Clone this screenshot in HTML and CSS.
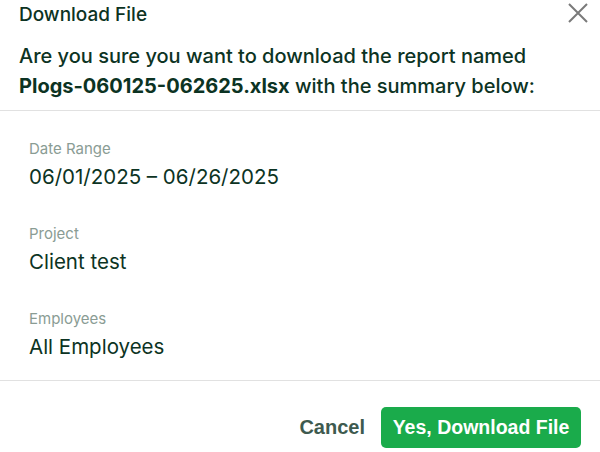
FILE: index.html
```html
<!DOCTYPE html>
<html lang="en">
<head>
  <meta charset="UTF-8" />
  <title>Download File</title>
  <link rel="stylesheet" href="styles.css">
</head>
<body>
  <div class="modal">
    <div class="modal-head">
      <div class="title-row">
        <h2>Download File</h2>
        <button class="close" aria-label="Close">
          <svg width="22" height="22" viewBox="0 0 22 22"><path d="M2 2 L20 20 M20 2 L2 20" stroke="#7a7a7a" stroke-width="2" fill="none"/></svg>
        </button>
      </div>
      <p class="question">Are you sure you want to download the report named<br><strong>Plogs-060125-062625.xlsx</strong> with the summary below:</p>
    </div>

    <div class="summary">
      <div class="field">
        <span class="label">Date Range</span>
        <span class="value">06/01/2025 – 06/26/2025</span>
      </div>
      <div class="field">
        <span class="label">Project</span>
        <span class="value">Client test</span>
      </div>
      <div class="field">
        <span class="label">Employees</span>
        <span class="value">All Employees</span>
      </div>
    </div>

    <div class="modal-foot">
      <button class="btn-cancel">Cancel</button>
      <button class="btn-primary">Yes, Download File</button>
    </div>
  </div>
</body>
</html>
```

FILE: styles.css
```css
* { margin: 0; padding: 0; box-sizing: border-box; }
body { font-family: 'Inter', 'Noto Sans', sans-serif; background: #fff; color: #0c3323; }
.modal { width: 600px; }

.modal-head { padding: 3px 19px 0; border-bottom: 1px solid #e1e1e1; height: 111px; }
.title-row { display: flex; justify-content: space-between; align-items: flex-start; }
.title-row h2 { font-size: 19px; font-weight: 500; line-height: 24px; white-space: nowrap; }
.close { background: none; border: none; margin: -1px -8px 0 0; cursor: pointer; }
.question { font-size: 20px; font-weight: 500; line-height: 30px; margin-top: 14px; white-space: nowrap; }
.question strong { font-weight: 700; }

.summary { padding: 28px 29px 0; height: 270px; border-bottom: 1px solid #e1e1e1; display: flex; flex-direction: column; gap: 34px; }
.field { display: flex; flex-direction: column; }
.label { font-size: 15px; color: #8a9c94; line-height: 19px; }
.value { font-size: 20.5px; line-height: 26px; margin-top: 6px; }

.modal-foot { display: flex; justify-content: flex-end; align-items: center; gap: 16px; padding: 26px 19px 0; }
.btn-cancel { background: none; border: none; font-family: 'Liberation Sans', Arial, sans-serif; font-weight: 700; font-size: 20px; color: #3e5a4f; cursor: pointer; }
.btn-primary { background: #1aab4b; color: #fff; border: none; border-radius: 5px; height: 41px; width: 200px; font-family: 'Liberation Sans', Arial, sans-serif; font-weight: 700; font-size: 19.5px; cursor: pointer; }
```
